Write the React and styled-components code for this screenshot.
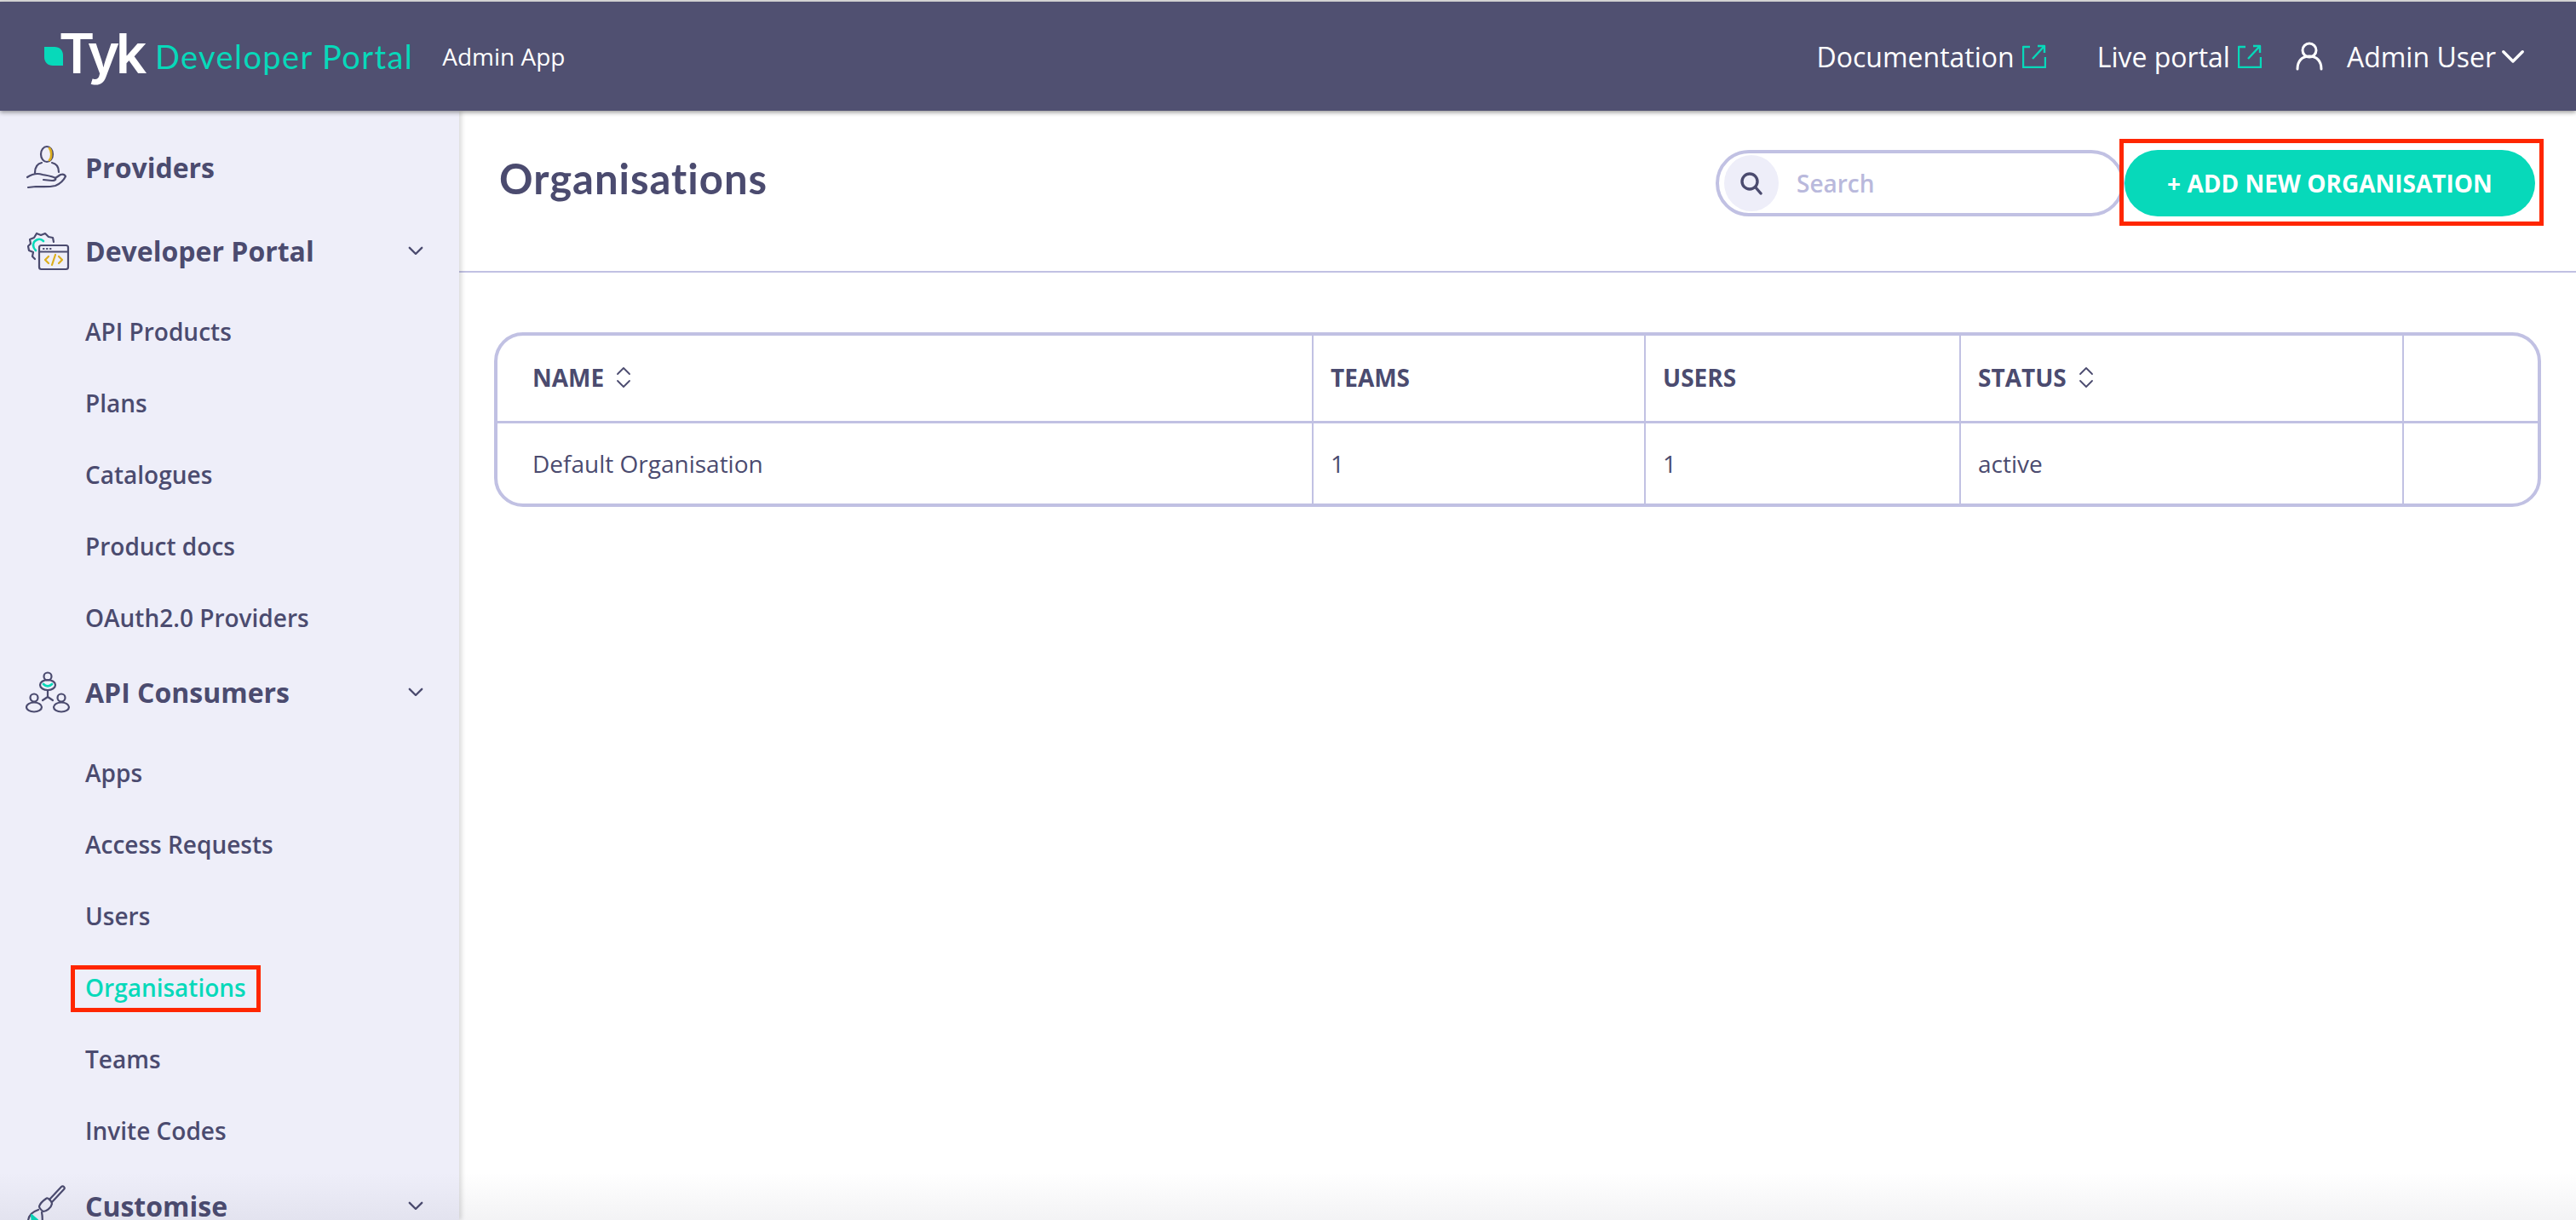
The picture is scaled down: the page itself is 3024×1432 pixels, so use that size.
import React from "react";
import styled, { createGlobalStyle } from "styled-components";

const ink = "#4b4b6f";
const teal = "#07d9ba";
const line = "#c1c1e3";
const red = "#ff2600";

const GlobalStyle = createGlobalStyle`
  html, body {
    margin: 0;
    height: 100%;
    overflow: hidden;
    background: #fff;
    color: ${ink};
    font-family: "Open Sans", "Liberation Sans", sans-serif;
  }
  * { box-sizing: border-box; }
`;

const Page = styled.div`
  position: relative;
  height: 1432px;
  padding-top: 2px;
  background: #dcdcdc;
  overflow: hidden;
  display: flex;
  flex-direction: column;
`;

const BottomFade = styled.div`
  position: absolute;
  left: 0;
  right: 0;
  bottom: 0;
  height: 56px;
  background: linear-gradient(rgba(50, 50, 80, 0), rgba(50, 50, 80, 0.06));
  pointer-events: none;
  z-index: 3;
`;

const TopBar = styled.header`
  position: relative;
  z-index: 2;
  flex: none;
  height: 128px;
  background: #505071;
  box-shadow: 0 2px 5px rgba(0, 0, 0, 0.4);
  display: flex;
  align-items: center;
  justify-content: space-between;
  padding: 0 60px 0 52px;
  color: #fff;
`;

const Brand = styled.div`
  display: flex;
  align-items: center;
`;

const LogoWord = styled.span`
  font-family: Inter, sans-serif;
  font-weight: 600;
  font-size: 64px;
  line-height: 1;
  letter-spacing: -4.5px;
  margin: -7px 0 0 -5px;
`;

const ProductName = styled.span`
  font-family: Lato, sans-serif;
  font-weight: 400;
  font-size: 38px;
  letter-spacing: 1.4px;
  color: ${teal};
  margin-left: 14px;
`;

const AppName = styled.span`
  font-size: 28px;
  margin-left: 34px;
`;

const TopLinks = styled.nav`
  display: flex;
  align-items: center;
`;

const TopLink = styled.a`
  display: flex;
  align-items: center;
  gap: 9px;
  font-size: 32px;
  margin-right: ${(p) => p.$gap}px;
`;

const UserName = styled.span`
  font-size: 32px;
  margin: 0 6px 0 28px;
`;

const Body = styled.div`
  flex: 1;
  display: flex;
  min-height: 0;
  background: #fff;
`;

const Sidebar = styled.aside`
  position: relative;
  z-index: 1;
  flex: none;
  width: 539px;
  padding-top: 22px;
  background: #eeeef9;
  box-shadow: 3px 0 5px rgba(0, 0, 0, 0.14);
  overflow: hidden;
`;

const Group = styled.section`
  margin-bottom: ${(p) => p.$after}px;
`;

const GroupRow = styled.div`
  height: 88px;
  display: flex;
  align-items: center;
  padding: 0 42px 0 30px;
  font-size: 32px;
  font-weight: 700;
`;

const GroupIcon = styled.svg`
  flex: none;
  width: 54px;
  height: 56px;
  margin: 2px 16px 0 0;
  fill: none;
  stroke: ${ink};
  stroke-width: 2.2;
  stroke-linecap: round;
  stroke-linejoin: round;
`;

const GroupLabel = styled.span`
  flex: 1;
`;

const SubList = styled.div`
  padding-top: 9px;
`;

const SubItem = styled.div`
  height: 84px;
  display: flex;
  align-items: center;
  padding-left: 100px;
  font-size: 28px;
  font-weight: 600;
  color: ${(p) => (p.$active ? teal : ink)};
`;

const Marked = styled.span`
  position: relative;
  &::after {
    content: "";
    position: absolute;
    left: -17px;
    right: -17px;
    top: -7px;
    bottom: -10px;
    border: 5px solid ${red};
  }
`;

const Main = styled.main`
  flex: 1;
  min-width: 0;
`;

const MainHead = styled.div`
  height: 190px;
  border-bottom: 2px solid ${line};
  display: flex;
  align-items: flex-start;
  justify-content: space-between;
  padding: 47px 48px 0 47px;
`;

const Title = styled.h1`
  margin: 0;
  font-family: Lato, sans-serif;
  font-weight: 700;
  font-size: 49px;
  letter-spacing: 1px;
  line-height: 64px;
  color: ${ink};
`;

const Actions = styled.div`
  display: flex;
  margin-top: -1px;
`;

const SearchBox = styled.div`
  width: 480px;
  height: 78px;
  border: 4px solid ${line};
  border-radius: 39px;
  padding: 2px 6px;
  display: flex;
  align-items: center;
  gap: 19px;
  background: #fff;
`;

const SearchBadge = styled.span`
  width: 64px;
  height: 66px;
  border-radius: 50%;
  background: #eeeef9;
  display: flex;
  align-items: center;
  justify-content: center;
`;

const SearchInput = styled.input`
  border: 0;
  outline: 0;
  flex: 1;
  min-width: 0;
  font: 600 28px "Open Sans", sans-serif;
  color: ${ink};
  &::placeholder {
    color: #b9b9dc;
    opacity: 1;
  }
`;

const AddButton = styled.button`
  position: relative;
  width: 482px;
  height: 78px;
  border: 0;
  border-radius: 39px;
  background: ${teal};
  color: #fff;
  font: 700 28px "Open Sans", sans-serif;
  text-transform: uppercase;
  &::after {
    content: "";
    position: absolute;
    left: -6px;
    right: -10px;
    top: -13px;
    bottom: -11px;
    border: 5px solid ${red};
  }
`;

const TableWrap = styled.div`
  margin: 70px 41px 0;
  border: 4px solid ${line};
  border-radius: 34px;
  overflow: hidden;
`;

const Table = styled.table`
  width: 100%;
  table-layout: fixed;
  border-collapse: separate;
  border-spacing: 0;
`;

const Th = styled.th`
  height: 103px;
  padding: 0 0 2px ${(p) => (p.$first ? 41 : 20)}px;
  border-bottom: 3px solid ${line};
  border-right: ${(p) => (p.$last ? "0" : `2px solid ${line}`)};
  text-align: left;
  font-size: 28px;
  font-weight: 700;
  color: ${ink};
`;

const Td = styled.td`
  height: 94px;
  padding: 0 0 0 ${(p) => (p.$first ? 41 : 20)}px;
  border-right: ${(p) => (p.$last ? "0" : `2px solid ${line}`)};
  font-size: 28px;
  color: ${ink};
`;

const HeadInner = styled.span`
  display: inline-flex;
  align-items: center;
  gap: 14px;
`;

const StrokeIcon = styled.svg`
  flex: none;
  fill: none;
  stroke: ${(p) => p.$color || "currentColor"};
  stroke-linecap: round;
  stroke-linejoin: round;
`;

const Leaf = () => (
  <svg width="22" height="22" viewBox="0 0 22 22" style={{ flex: "none" }}>
    <path d="M0 0h12c6 0 10 4 10 10v12H10C4 22 0 18 0 12z" fill={teal} />
  </svg>
);

const ExternalIcon = () => (
  <StrokeIcon $color={teal} width="28" height="28" viewBox="0 0 28 28" strokeWidth="2.4">
    <path d="M9 3H1v24h26v-12" strokeLinecap="butt" />
    <path d="M12 17L26 2M18 2h8v8" strokeLinecap="butt" />
  </StrokeIcon>
);

const UserIcon = () => (
  <StrokeIcon width="32" height="34" viewBox="0 0 32 34" strokeWidth="3">
    <circle cx="16" cy="10" r="8" />
    <path d="M2 32c0-9 5-15 14-15s14 6 14 15" />
  </StrokeIcon>
);

const Chevron = ({ size = 18, width = 2.6, color }) => (
  <StrokeIcon $color={color} width={size} height={size * 0.6} viewBox="0 0 20 12" strokeWidth={width}>
    <path d="M2 2l8 8 8-8" />
  </StrokeIcon>
);

const SortIcon = () => (
  <StrokeIcon width="18" height="26" viewBox="0 0 18 26" strokeWidth="1.8">
    <path d="M2 9l7-7 7 7M2 17l7 7 7-7" />
  </StrokeIcon>
);

const SearchGlyph = () => (
  <StrokeIcon $color={ink} width="28" height="28" viewBox="0 0 28 28" strokeWidth="3.4">
    <circle cx="12" cy="12" r="9" />
    <path d="M18.5 18.5L25 26" />
  </StrokeIcon>
);

const ProvidersIcon = () => (
  <GroupIcon viewBox="0 0 54 56">
    <ellipse cx="25" cy="12" rx="7" ry="9" />
    <path d="M28 5c3 3 3 11 0 14" stroke="#dcae1d" strokeWidth="2.6" />
    <path d="M11 34c0-7 3-11 8-12M39 33c0-6-3-10-8-11" />
    <path d="M2 39c6-4 12-5 18-3 5 1 12 2 15 4 1 2-1 3-4 3l-10-1" />
    <path d="M35 40l6-4c3-1 5 0 6 2-2 4-7 9-12 11-9 2-16 1-23 1l-9 1" />
  </GroupIcon>
);

const PortalIcon = () => (
  <GroupIcon viewBox="0 0 54 56">
    <path d="M11 37l-3-3 1-5-5-2-1-5 3-3-1-5 5-2 3-5 5 2 5-2 4 4 5 1 1 5" />
    <path d="M9 21a7 7 0 0 1 12-5" stroke={teal} strokeWidth="2.6" />
    <path d="M9 21c0 2 1 4 3 6" stroke={teal} strokeWidth="2.6" />
    <rect x="16" y="21" width="34" height="28" rx="2.5" fill="#eeeef9" />
    <path d="M16 28.5h34" />
    <path d="M21 25h.5M25 25h.5M29 25h.5" />
    <path d="M27 34l-4 4 4 4M39 34l4 4-4 4M35 32l-4 12" stroke="#dcae1d" />
  </GroupIcon>
);

const ConsumersIcon = () => (
  <GroupIcon viewBox="0 0 54 56">
    <circle cx="26" cy="9" r="4.5" />
    <ellipse cx="26" cy="19" rx="9" ry="6" />
    <path d="M21 18c3 3 7 3 10 0" stroke={teal} strokeWidth="2.8" />
    <path d="M26 25v8M26 33l-6 4M26 33l6 4" />
    <circle cx="10" cy="34" r="4.5" />
    <ellipse cx="10" cy="45" rx="9" ry="5.5" />
    <circle cx="42" cy="34" r="4.5" />
    <ellipse cx="42" cy="45" rx="9" ry="5.5" />
  </GroupIcon>
);

const BrushIcon = () => (
  <GroupIcon viewBox="0 0 54 56">
    <path d="M28 20L42 5c2-2 5 1 3 3L31 23" />
    <path d="M24 19c2-2 7 3 7 6-1 5-7 9-10 9-2-1-5-4-5-6 1-3 5-7 8-9z" />
    <path d="M15 32c-6 2-12 6-12 14v6h16c1-6 1-12 0-17" />
    <path d="M7 38l7 6-6 3z" fill={teal} stroke={teal} />
  </GroupIcon>
);

const groups = [
  { label: "Providers", icon: <ProvidersIcon />, after: 10 },
  {
    label: "Developer Portal",
    icon: <PortalIcon />,
    after: 1,
    items: ["API Products", "Plans", "Catalogues", "Product docs", "OAuth2.0 Providers"],
  },
  {
    label: "API Consumers",
    icon: <ConsumersIcon />,
    after: 2,
    items: ["Apps", "Access Requests", "Users", "Organisations", "Teams", "Invite Codes"],
  },
  { label: "Customise", icon: <BrushIcon />, after: 0, open: true },
];

const columns = [
  { label: "NAME", width: 958, sort: true, first: true },
  { label: "TEAMS", width: 390 },
  { label: "USERS", width: 370 },
  { label: "STATUS", width: 520, sort: true },
  { label: "", last: true },
];

const rows = [["Default Organisation", "1", "1", "active", ""]];

export default function App() {
  return (
    <Page>
      <GlobalStyle />
      <TopBar>
        <Brand>
          <Leaf />
          <LogoWord>Tyk</LogoWord>
          <ProductName>Developer Portal</ProductName>
          <AppName>Admin App</AppName>
        </Brand>
        <TopLinks>
          <TopLink $gap={60}>
            Documentation <ExternalIcon />
          </TopLink>
          <TopLink $gap={40}>
            Live portal <ExternalIcon />
          </TopLink>
          <UserIcon />
          <UserName>Admin User</UserName>
          <Chevron size={28} width={2.4} />
        </TopLinks>
      </TopBar>
      <Body>
        <Sidebar>
          {groups.map((g) => (
            <Group key={g.label} $after={g.after}>
              <GroupRow>
                {g.icon}
                <GroupLabel>{g.label}</GroupLabel>
                {(g.items || g.open) && <Chevron />}
              </GroupRow>
              {g.items && (
                <SubList>
                  {g.items.map((item) => (
                    <SubItem key={item} $active={item === "Organisations"}>
                      {item === "Organisations" ? <Marked>{item}</Marked> : item}
                    </SubItem>
                  ))}
                </SubList>
              )}
            </Group>
          ))}
        </Sidebar>
        <Main>
          <MainHead>
            <Title>Organisations</Title>
            <Actions>
              <SearchBox>
                <SearchBadge>
                  <SearchGlyph />
                </SearchBadge>
                <SearchInput placeholder="Search" />
              </SearchBox>
              <AddButton>+ Add new organisation</AddButton>
            </Actions>
          </MainHead>
          <TableWrap>
            <Table>
              <colgroup>
                {columns.map((c) => (
                  <col key={c.label} width={c.width} />
                ))}
              </colgroup>
              <thead>
                <tr>
                  {columns.map((c) => (
                    <Th key={c.label} $first={c.first} $last={c.last}>
                      <HeadInner>
                        {c.label}
                        {c.sort && <SortIcon />}
                      </HeadInner>
                    </Th>
                  ))}
                </tr>
              </thead>
              <tbody>
                {rows.map((r) => (
                  <tr key={r[0]}>
                    {r.map((cell, i) => (
                      <Td key={i} $first={i === 0} $last={i === r.length - 1}>
                        {cell}
                      </Td>
                    ))}
                  </tr>
                ))}
              </tbody>
            </Table>
          </TableWrap>
        </Main>
      </Body>
      <BottomFade />
    </Page>
  );
}
